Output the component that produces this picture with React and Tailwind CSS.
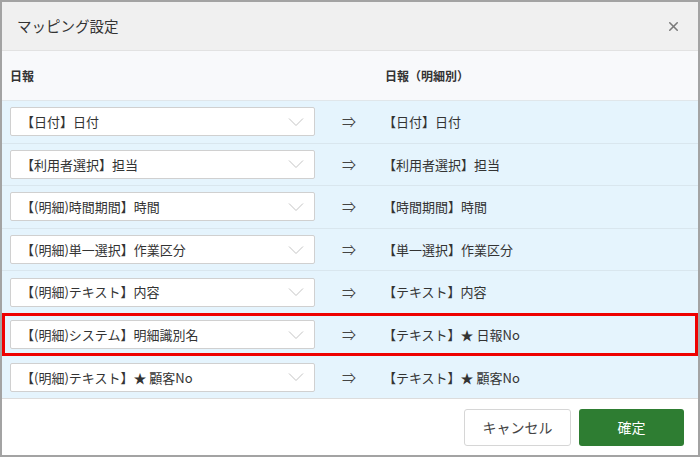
import { X } from 'lucide-react';

const rows = [
    { from: '【日付】日付', to: '【日付】日付' },
    { from: '【利用者選択】担当', to: '【利用者選択】担当' },
    { from: '【(明細)時間期間】時間', to: '【時間期間】時間' },
    { from: '【(明細)単一選択】作業区分', to: '【単一選択】作業区分' },
    { from: '【(明細)テキスト】内容', to: '【テキスト】内容' },
    { from: '【(明細)システム】明細識別名', to: '【テキスト】★ 日報No', marked: true },
    { from: '【(明細)テキスト】★ 顧客No', to: '【テキスト】★ 顧客No' },
];

const Chevron = () => (
    <svg width="16" height="10" viewBox="0 0 16 10" fill="none" stroke="#c4c4c4" strokeWidth="1">
        <path d="M1 1.5 L8 8.5 L15 1.5" />
    </svg>
);

const MappingRow = ({ row }) => (
    <div className="relative flex-1 flex items-center border-b border-[#d9e6ee] last:border-b-0">
        <div className="ml-[8px] w-[305px] h-[29px] flex items-center justify-between pl-[10px] pr-[10px] bg-white border border-[#d0d0d0] rounded-[2px]">
            <span className="text-[13px] text-[#333]">{row.from}</span>
            <Chevron />
        </div>
        <span className="w-[68px] text-center text-[14px] text-[#444]">⇒</span>
        <span className="text-[13px] text-[#333]">{row.to}</span>
        {row.marked && (
            <div className="absolute left-0 right-0 top-[-1px] bottom-[-1px] border-[3px] border-[#ee0000] pointer-events-none" />
        )}
    </div>
);

export default function App() {
    return (
        <div className="w-[700px] h-[457px] flex flex-col bg-white border-2 border-[#a3a3a3] overflow-hidden"
            style={{ fontFamily: '"Noto Sans CJK JP", "Noto Sans", sans-serif' }}>
            <div className="h-[49px] shrink-0 flex items-center justify-between pl-[15px] pr-[17px] bg-[#f0f0f0] border-b border-[#e2e2e2]">
                <h3 className="text-[14.5px] text-[#333]">マッピング設定</h3>
                <X size={15} strokeWidth={2.5} className="text-[#7a7a7a]" />
            </div>

            <div className="h-[50px] shrink-0 flex items-center bg-[#f8f9fb] border-b border-[#e0e6ea]">
                <span className="ml-[8px] w-[375px] text-[12px] font-bold text-[#333]">日報</span>
                <span className="text-[12px] font-bold text-[#333]">日報（明細別）</span>
            </div>

            <div className="h-[298px] shrink-0 flex flex-col bg-[#e5f4fd] border-b border-[#dcdcdc]">
                {rows.map((r, i) => <MappingRow key={i} row={r} />)}
            </div>

            <div className="flex-1 flex items-center justify-end gap-[8px] pr-[14px]">
                <button className="w-[107px] h-[37px] rounded-[3px] border border-[#d6d6d6] bg-white text-[14px] text-[#444]">
                    キャンセル
                </button>
                <button className="w-[105px] h-[37px] rounded-[3px] bg-[#2e7d32] text-[14px] text-white">
                    確定
                </button>
            </div>
        </div>
    );
}
